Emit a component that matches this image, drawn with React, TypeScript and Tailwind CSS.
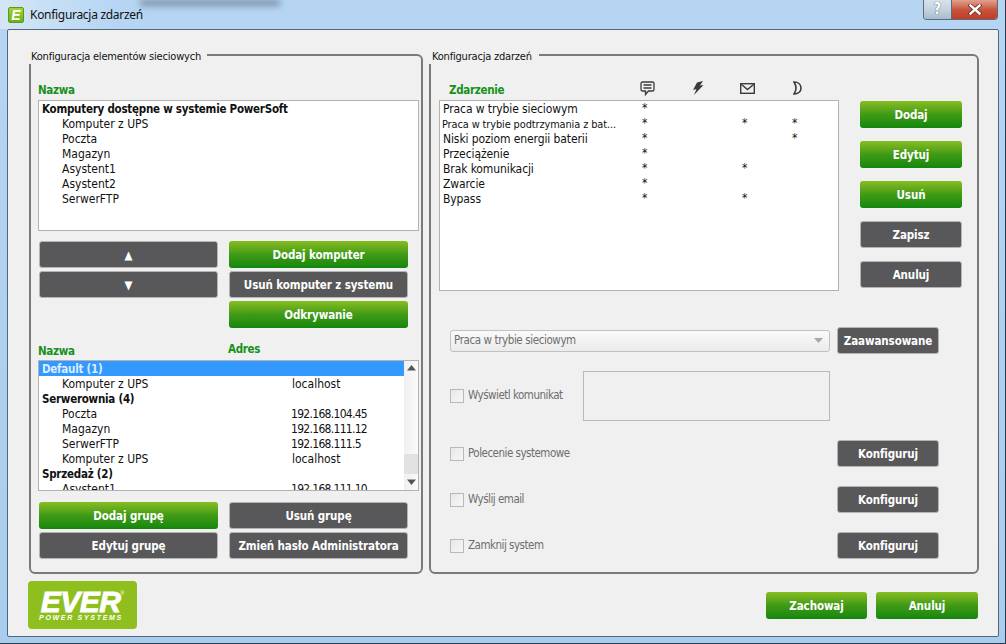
import React from "react";

const font = "font-['DejaVu_Sans_Condensed','Noto_Sans',sans-serif]";

// green and dark buttons share the same shape
function Btn({ label, green, className }: { label: string; green?: boolean; className: string }) {
  return (
    <div
      className={`flex h-[27px] items-center justify-center rounded-[3px] pt-[2px] text-[11.5px] font-bold tracking-[-0.1px] whitespace-nowrap text-white ${
        green
          ? "bg-gradient-to-b from-[#86bd22] via-[#3f9a16] to-[#0f870e]"
          : "border border-[#b4b4b4] bg-[#58585a]"
      } ${className}`}
    >
      {label}
    </div>
  );
}

function Group({ title, titleClass, className, children }: { title: string; titleClass: string; className: string; children: React.ReactNode }) {
  return (
    <div className={`relative h-[520px] rounded-[6px] border-2 border-[#7a7a7a] ${className}`}>
      <div className={`absolute -left-[3px] -top-[6px] h-[14px] whitespace-nowrap bg-[#f0f0f0] text-[11px] leading-[14px] tracking-[-0.2px] text-[#111] ${titleClass}`}>
        {title}
      </div>
      {children}
    </div>
  );
}

function Row({ text, bold, indent, addr, ip, selected }: { text: string; bold?: boolean; indent?: boolean; addr?: string; ip?: boolean; selected?: boolean }) {
  return (
    <div className={`flex h-[15px] items-center whitespace-nowrap text-[12px] leading-[15px] ${selected ? "bg-[#3399ff] text-[#dcecff]" : "text-[#111]"}`}>
      <span className={`${indent ? "pl-[23px]" : "pl-[3px]"} w-[253px] shrink-0 pt-[2px] ${bold ? "text-[11.5px] font-bold tracking-[-0.25px]" : ""}`}>{text}</span>
      {addr && <span className={`pt-[2px] ${ip ? "-ml-px tracking-[-0.7px]" : ""}`}>{addr}</span>}
    </div>
  );
}

function ScrollBar() {
  return (
    <div className="flex h-full w-[14px] shrink-0 flex-col items-center bg-gradient-to-r from-[#f0f0f0] to-[#fafafa]">
      <div className="flex h-[14px] items-center">
        <svg width="9" height="6" viewBox="0 0 9 6"><path d="M4.5 0L9 5.5H0z" fill="#555" /></svg>
      </div>
      <div className="mt-[79px] h-[20px] w-full bg-[#e2e2e2]" />
      <div className="flex h-[14px] flex-1 items-center">
        <svg width="9" height="6" viewBox="0 0 9 6"><path d="M0 .5h9L4.5 6z" fill="#555" /></svg>
      </div>
    </div>
  );
}

function EventRow({ text, marks, small }: { text: string; marks: number[]; small?: boolean }) {
  return (
    <div className="grid h-[15px] grid-cols-[199px_50px_50px_50px_50px] pl-[3px] text-[12px] leading-[15px] text-[#111]">
      <span className={`pt-px tracking-[-0.1px] ${small ? "-ml-px whitespace-nowrap text-[10.9px]" : ""}`}>{text}</span>
      {[0, 1, 2, 3].map((i) => (
        <span key={i}>{marks.includes(i) ? "*" : ""}</span>
      ))}
    </div>
  );
}

function CheckRow({ label, children, className }: { label: string; children?: React.ReactNode; className: string }) {
  return (
    <div className={`ml-[11px] flex w-[489px] items-center ${className}`}>
      <div className="h-[14px] w-[14px] shrink-0 border border-[#b9b9b9] bg-gradient-to-br from-[#e8e8e8] to-[#f6f6f6]" />
      <span className="ml-[4px] whitespace-nowrap text-[11.5px] tracking-[-0.5px] text-[#6e6e6e]">{label}</span>
      {children}
    </div>
  );
}

function Logo() {
  return (
    <div className="flex h-[48px] w-[109px] flex-col items-center rounded-[4px] bg-[#8fbf1f] pt-[7px] font-['Liberation_Sans',sans-serif] italic text-white">
      <div className="flex h-[25px] items-start">
        <span className="text-[30px] font-bold leading-[27px] tracking-[-0.5px] [-webkit-text-stroke:0.9px_white]">EVER</span>
        <span className="mt-[3px] text-[5px] not-italic leading-none">®</span>
      </div>
      <span className="-ml-[3px] whitespace-nowrap text-[7px] font-bold leading-[9px] tracking-[1.7px]">POWER SYSTEMS</span>
    </div>
  );
}

export default function App() {
  return (
    <div className={`relative h-[644px] w-[1006px] overflow-hidden border-r border-b border-[#2e3a46] bg-gradient-to-b from-[#b5d5f3] to-[#a9cdee] ${font}`}>
      {/* blurred desktop behind the aero glass */}
      <div className="absolute left-[140px] top-0 h-[6px] w-[140px] bg-[#7b8fa6] blur-[3px]" />
      <div className="absolute left-0 top-0 h-[29px] w-[120px] bg-gradient-to-r from-[#d4e6f6] to-transparent" />

      <div className="relative flex h-[29px] items-start">
        <div className="ml-[8px] mt-[7px] flex h-[16px] w-[16px] items-center justify-center rounded-[2px] border border-[#5c9a12] bg-gradient-to-b from-[#a4d23a] to-[#6fb018] font-['Liberation_Sans',sans-serif] text-[14px] font-bold italic leading-none text-white">E</div>
        <span className="ml-[6px] mt-[6px] font-['Noto_Sans',sans-serif] text-[12px] leading-[18px] tracking-[-0.3px] text-[#111]">Konfiguracja zdarzeń</span>
        <div className="ml-auto mr-[7px] flex h-[20px] w-[75px] overflow-hidden rounded-b-[4px] border border-t-0 border-[#5b6b7c]">
          <div className="flex w-[28px] items-center justify-center border-r border-[#5b6b7c] bg-gradient-to-b from-[#d6e2ee] via-[#c5d3e0] to-[#a9bccd] text-[15px] font-bold text-white [text-shadow:0_0_1px_#222]">?</div>
          <div className="flex flex-1 items-center justify-center bg-gradient-to-b from-[#e0a091] via-[#c9553c] to-[#c23a26]">
            <svg width="14" height="11" viewBox="0 0 14 11" fill="none" strokeLinecap="square">
              <path d="M2.500 1.500l9 8M11.500 1.500l-9 8" stroke="#6b3028" strokeWidth="4" />
              <path d="M2.500 1.500l9 8M11.500 1.500l-9 8" stroke="#fff" strokeWidth="2.400" />
            </svg>
          </div>
        </div>
      </div>

      <div className="ml-[7px] h-[608px] w-[992px] rounded-[2px] border border-[#54667a] bg-[#f0f0f0] pl-[21px] pt-[24px]">
        <div className="flex gap-[6px]">
          <Group title="Konfiguracja elementów sieciowych" titleClass="w-[179px] pl-[3px]" className="w-[394px]">
            <div className="pl-[7px] pt-[27px]">
              <div className="h-[17px] text-[11.5px] font-bold leading-[14px] tracking-[-0.3px] text-[#16901a]">Nazwa</div>
              <div className="h-[131px] w-[381px] border border-[#b2b2b2] bg-white">
                <Row text="Komputery dostępne w systemie PowerSoft" bold />
                <Row text="Komputer z UPS" indent />
                <Row text="Poczta" indent />
                <Row text="Magazyn" indent />
                <Row text="Asystent1" indent />
                <Row text="Asystent2" indent />
                <Row text="SerwerFTP" indent />
              </div>
              <div className="ml-px mt-[10px] flex gap-[11px]">
                <div className="flex w-[179px] flex-col gap-[3px]">
                  <Btn label="▲" className="w-full" />
                  <Btn label="▼" className="w-full" />
                </div>
                <div className="flex w-[179px] flex-col gap-[3px]">
                  <Btn label="Dodaj komputer" green className="w-full" />
                  <Btn label="Usuń komputer z systemu" className="w-full" />
                  <Btn label="Odkrywanie" green className="w-full" />
                </div>
              </div>
              <div className="mt-[13px] flex h-[19px] text-[11.5px] font-bold leading-[14px] tracking-[-0.3px] text-[#16901a]">
                <span className="mt-[3px] w-[190px]">Nazwa</span>
                <span className="mt-px">Adres</span>
              </div>
              <div className="flex h-[131px] w-[381px] overflow-hidden border border-[#b2b2b2] bg-white">
                <div className="flex-1 overflow-hidden">
                  <Row text="Default (1)" bold selected />
                  <Row text="Komputer z UPS" indent addr="localhost" />
                  <Row text="Serwerownia (4)" bold />
                  <Row text="Poczta" indent addr="192.168.104.45" ip />
                  <Row text="Magazyn" indent addr="192.168.111.12" ip />
                  <Row text="SerwerFTP" indent addr="192.168.111.5" ip />
                  <Row text="Komputer z UPS" indent addr="localhost" />
                  <Row text="Sprzedaż (2)" bold />
                  <Row text="Asystent1" indent addr="192.168.111.10" ip />
                </div>
                <ScrollBar />
              </div>
              <div className="ml-px mt-[11px] grid w-[369px] grid-cols-[179px_179px] gap-x-[11px] gap-y-[3px]">
                <Btn label="Dodaj grupę" green className="w-full" />
                <Btn label="Usuń grupę" className="w-full" />
                <Btn label="Edytuj grupę" className="w-full" />
                <Btn label="Zmień hasło Administratora" className="w-full" />
              </div>
            </div>
          </Group>

          <Group title="Konfiguracja zdarzeń" titleClass="w-[111px] pl-[4px]" className="w-[550px]">
            <div className="pl-[8px] pt-[26px]">
              <div className="grid h-[18px] grid-cols-[200px_50px_50px_50px_50px] items-start">
                <span className="pl-[10px] pt-[1px] text-[11.5px] font-bold leading-[14px] tracking-[-0.3px] text-[#16901a]">Zdarzenie</span>
                <svg className="-mt-[1px] ml-px" width="15" height="15" viewBox="0 0 15 15" fill="none" stroke="#3a3a3a" strokeWidth="1.300">
                  <path d="M2.500 1h10A1.500 1.500 0 0 1 14 2.500v6a1.500 1.500 0 0 1-1.500 1.500H8.500L5.500 13.500V10h-3A1.500 1.500 0 0 1 1 8.500v-6A1.500 1.500 0 0 1 2.500 1z" />
                  <path d="M3.500 4h8M3.500 7h8" />
                </svg>
                <svg className="-mt-[1px] ml-[3px]" width="12" height="14" viewBox="0 0 12 14">
                  <path d="M5 1.500l6-1.500-3 4.500 3.500-.5L2 14l2.500-6L1 9z" fill="#3a3a3a" />
                </svg>
                <svg className="mt-[1px] ml-[1px]" width="15" height="11" viewBox="0 0 15 11" fill="none" stroke="#3a3a3a" strokeWidth="1.400">
                  <rect x=".7" y=".7" width="13.600" height="9.600" />
                  <path d="M1.500 1.500l6 5 6-5" />
                </svg>
                <svg className="-mt-[1px] ml-[4px]" width="9" height="14" viewBox="0 0 9 14">
                  <path d="M1 1C5.500 1 8 3.800 8 7s-2.500 6-7 6c1.300-2 2-4 2-6S2.300 3 1 1z" fill="none" stroke="#3a3a3a" strokeWidth="1.600" />
                </svg>
              </div>
              <div className="flex gap-[21px]">
                <div className="h-[191px] w-[400px] border border-[#b2b2b2] bg-white">
                  <EventRow text="Praca w trybie sieciowym" marks={[0]} />
                  <EventRow text="Praca w trybie podtrzymania z bat..." small marks={[0, 2, 3]} />
                  <EventRow text="Niski poziom energii baterii" marks={[0, 3]} />
                  <EventRow text="Przeciążenie" marks={[0]} />
                  <EventRow text="Brak komunikacji" marks={[0, 2]} />
                  <EventRow text="Zwarcie" marks={[0]} />
                  <EventRow text="Bypass" marks={[0, 2]} />
                </div>
                <div className="mt-px flex flex-col gap-[13px]">
                  <Btn label="Dodaj" green className="w-[102px]" />
                  <Btn label="Edytuj" green className="w-[102px]" />
                  <Btn label="Usuń" green className="w-[102px]" />
                  <Btn label="Zapisz" className="w-[102px]" />
                  <Btn label="Anuluj" className="w-[102px]" />
                </div>
              </div>
              <div className="ml-[11px] mt-[36px] flex items-center gap-[7px]">
                <div className="flex h-[22px] w-[380px] items-center justify-between rounded-[3px] border border-[#c2c2c2] bg-gradient-to-b from-[#fafafa] to-[#ebebeb] pl-[3px] pr-[6px] text-[11.5px] tracking-[-0.4px] text-[#6e6e6e]">
                  <span>Praca w trybie sieciowym</span>
                  <svg width="9" height="5" viewBox="0 0 9 5"><path d="M0 0h9L4.500 5z" fill="#a8a8a8" /></svg>
                </div>
                <Btn label="Zaawansowane" className="w-[102px]" />
              </div>
              <CheckRow label="Wyświetl komunikat" className="mt-[17px] h-[50px]">
                <div className="ml-auto mr-[109px] h-[50px] w-[247px] border border-[#b9b9b9]" />
              </CheckRow>
              <CheckRow label="Polecenie systemowe" className="mt-[19px]">
                <Btn label="Konfiguruj" className="ml-auto w-[102px]" />
              </CheckRow>
              <CheckRow label="Wyślij email" className="mt-[19px]">
                <Btn label="Konfiguruj" className="ml-auto w-[102px]" />
              </CheckRow>
              <CheckRow label="Zamknij system" className="mt-[19px]">
                <Btn label="Konfiguruj" className="ml-auto w-[102px]" />
              </CheckRow>
            </div>
          </Group>
        </div>

        <div className="-ml-px mt-[7px] flex w-[950px] items-start justify-between">
          <Logo />
          <div className="mt-[11px] flex gap-[9px]">
            <Btn label="Zachowaj" green className="w-[101px]" />
            <Btn label="Anuluj" green className="w-[102px]" />
          </div>
        </div>
      </div>
    </div>
  );
}
